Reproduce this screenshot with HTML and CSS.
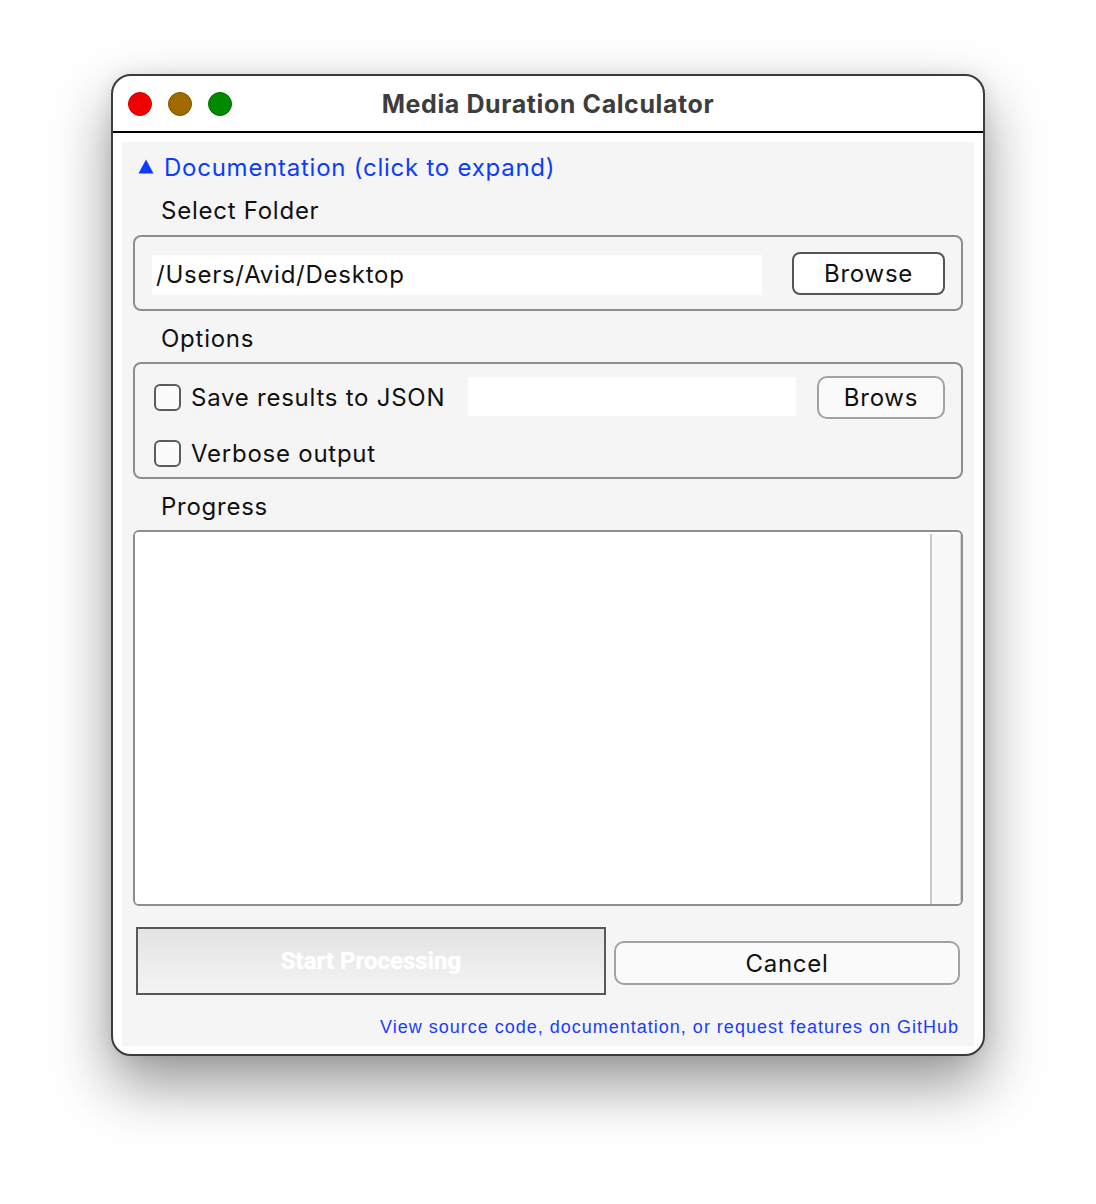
FILE: index.html
```html
<!DOCTYPE html>
<html>
<head>
<meta charset="utf-8">
<link rel="stylesheet" href="styles.css">
</head>
<body>
<div class="stage">
  <div class="window">
    <div class="titlebar">
      <div class="lights">
        <span class="light red"></span>
        <span class="light amber"></span>
        <span class="light green"></span>
      </div>
      <div class="title">Media Duration Calculator</div>
      <div></div>
    </div>
    <div class="body">
      <div class="panel">
        <div class="doc">
          <svg class="tri" width="16" height="15" viewBox="0 0 16 15"><polygon points="8,0.5 15.5,14.5 0.5,14.5" fill="#0b3cff"/></svg>
          <span>Documentation (click to expand)</span>
        </div>
        <div class="label first">Select Folder</div>
        <div class="frame frame-folder">
          <div class="entry entry-folder">/Users/Avid/Desktop</div>
          <div class="btn btn-dark">Browse</div>
        </div>
        <div class="label">Options</div>
        <div class="frame frame-options">
          <div class="opt-row">
            <span class="check"></span>
            <span class="opt-text">Save results to JSON</span>
            <span class="spacer"></span>
            <div class="entry entry-json"></div>
            <div class="btn btn-light btn-brows">Brows</div>
          </div>
          <div class="opt-row second">
            <span class="check"></span>
            <span class="opt-text">Verbose output</span>
          </div>
        </div>
        <div class="label">Progress</div>
        <div class="frame frame-progress">
          <div class="log"></div>
          <div class="scroll"></div>
        </div>
        <div class="actions">
          <div class="start">Start Processing</div>
          <div class="btn btn-light btn-cancel">Cancel</div>
        </div>
        <div class="footer">View source code, documentation, or request features on GitHub</div>
      </div>
    </div>
  </div>
</div>
</body>
</html>
```

FILE: styles.css
```css
html, body {
  margin: 0;
  padding: 0;
  background: #ffffff;
}

body {
  font-family: Inter, "Noto Sans", sans-serif;
  color: #111111;
}

.stage {
  padding: 74px 0 0 111px;
  min-height: 1204px;
  box-sizing: border-box;
  overflow: hidden;
}

.window {
  width: 874px;
  height: 982px;
  box-sizing: border-box;
  border: 2px solid #3c3c3c;
  border-radius: 20px;
  background: #ffffff;
  box-shadow: 0 28px 60px rgba(0, 0, 0, 0.42), 0 0 18px rgba(0, 0, 0, 0.08);
  display: flex;
  flex-direction: column;
  overflow: hidden;
}

.titlebar {
  height: 55px;
  flex: none;
  border-bottom: 2px solid #000000;
  display: grid;
  grid-template-columns: 1fr auto 1fr;
  align-items: center;
}

.lights {
  display: flex;
  gap: 16px;
  padding-left: 15px;
}

.light {
  width: 24px;
  height: 24px;
  box-sizing: border-box;
  border-radius: 50%;
  border: 1.5px solid;
}

.red { background: #ee0000; border-color: #c40000; }
.amber { background: #a06a00; border-color: #7c5200; }
.green { background: #008a00; border-color: #006a00; }

.title {
  font-family: Inter, sans-serif;
  font-weight: 700;
  font-size: 25px;
  color: #3d3d3d;
  letter-spacing: 0.6px;
}

.body {
  flex: 1;
  padding: 9px 9px 8px;
  display: flex;
}

.panel {
  flex: 1;
  background: #f5f5f5;
  padding: 10px 11px 0;
  display: flex;
  flex-direction: column;
}

.doc {
  height: 30px;
  display: flex;
  align-items: center;
  gap: 10px;
  padding-left: 5px;
  color: #0b3cff;
  font-size: 24px;
  letter-spacing: 0.75px;
}

.tri {
  margin-top: -1px;
}

.label {
  height: 30px;
  line-height: 30px;
  font-size: 24px;
  letter-spacing: 0.75px;
  padding-left: 28px;
  margin-top: 13px;
  margin-bottom: 8px;
}

.label.first {
  margin-top: 14px;
  margin-bottom: 9px;
}

.frame {
  box-sizing: border-box;
  border: 2px solid #8e8e8e;
  border-radius: 8px;
}

.frame-folder {
  height: 76px;
  display: flex;
  align-items: center;
  padding: 0 16px 0 17px;
}

.entry {
  background: #ffffff;
  height: 40px;
  box-sizing: border-box;
  font-size: 24px;
  letter-spacing: 0.75px;
  line-height: 40px;
  padding-left: 4px;
}

.entry-folder {
  width: 610px;
  margin-right: 30px;
  margin-top: 3px;
}

.btn {
  box-sizing: border-box;
  height: 43px;
  display: flex;
  align-items: center;
  justify-content: center;
  font-size: 24px;
  letter-spacing: 0.75px;
  color: #111111;
}

.btn-dark {
  width: 153px;
  margin-top: 1px;
  border: 2px solid #555555;
  border-radius: 8px;
  background: #ffffff;
}

.btn-light {
  border: 2px solid #a2a2a2;
  background: #fafafa;
}

.frame-options {
  height: 117px;
  padding: 12px 16px 0 19px;
}

.opt-row {
  height: 43px;
  display: flex;
  align-items: center;
}

.opt-row.second {
  height: 30px;
  margin-top: 19px;
}

.check {
  width: 27px;
  height: 27px;
  box-sizing: border-box;
  border: 2px solid #5c5c5c;
  border-radius: 6px;
  background: #fbfbfb;
  margin-right: 10px;
  flex: none;
}

.opt-text {
  font-size: 24px;
  letter-spacing: 0.75px;
}

.spacer {
  flex: 1;
}

.entry-json {
  width: 328px;
  height: 39px;
  margin-right: 21px;
  margin-top: -2px;
}

.btn-brows {
  width: 128px;
  border-radius: 10px;
}

.frame-progress {
  height: 376px;
  border-radius: 6px;
  display: flex;
  background: #ffffff;
  overflow: hidden;
}

.log {
  flex: 1;
  background: #ffffff;
}

.scroll {
  width: 28px;
  margin-top: 2px;
  border-left: 2px solid #c9c9c9;
  border-right: 1px solid #d6d6d6;
  background: #f8f8f8;
}

.actions {
  display: flex;
  align-items: center;
  margin-top: 21px;
  padding: 0 3px;
  gap: 8px;
}

.start {
  width: 470px;
  height: 68px;
  box-sizing: border-box;
  border: 2px solid #585858;
  background: linear-gradient(#e3e3e3, #f4f4f4);
  display: flex;
  align-items: center;
  justify-content: center;
  font-family: Roboto, "Liberation Sans", sans-serif;
  font-weight: 700;
  font-size: 24px;
  letter-spacing: 0;
  color: #ffffff;
  text-shadow: 0 0 1px rgba(255, 255, 255, 0.9);
}

.btn-cancel {
  flex: 1;
  height: 44px;
  margin-top: 4px;
  border-radius: 10px;
}

.footer {
  margin-top: 20px;
  height: 24px;
  line-height: 24px;
  text-align: right;
  padding-right: 4px;
  font-family: "Liberation Sans", Arial, sans-serif;
  font-size: 18px;
  letter-spacing: 1px;
  color: #1a3cff;
}
```
